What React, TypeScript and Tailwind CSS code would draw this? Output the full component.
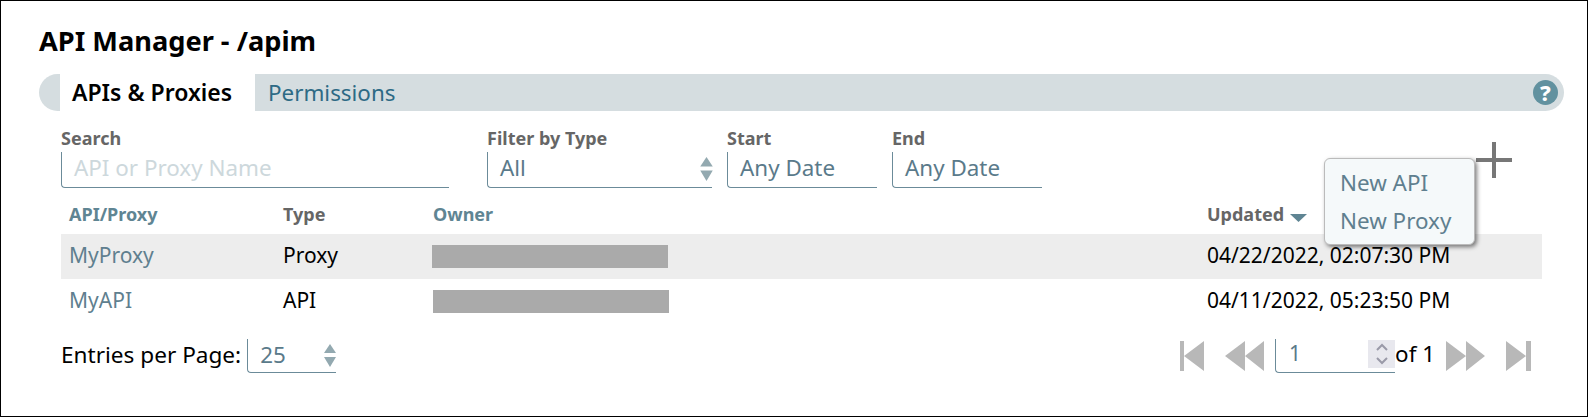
const rows = [
  { name: "MyProxy", type: "Proxy", updated: "04/22/2022, 02:07:30 PM", bar: "ml-0", shade: true },
  { name: "MyAPI", type: "API", updated: "04/11/2022, 05:23:50 PM", bar: "ml-[1px]", shade: false },
];

function Stepper({ className }: { className: string }) {
  return (
    <svg viewBox="0 0 12 23" className={className} fill="#93a9b0">
      <path d="M6 0 L12 9 H0 Z" />
      <path d="M0 13 H12 L6 23 Z" />
    </svg>
  );
}

function Field({ label, width, children }: { label: string; width: string; children: React.ReactNode }) {
  return (
    <div className={`flex flex-col ${width}`}>
      <label className="h-[25px] text-[18px] leading-[22px] font-bold text-[#666]">{label}</label>
      <div className="relative flex h-[36px] items-center rounded-bl-[4px] border-b border-l border-[#6b8b99] pb-[3px] pl-[12px] text-[22.4px] text-[#5a7a8a]">
        {children}
      </div>
    </div>
  );
}

function PagerIcon({ d, className, box }: { d: string; className: string; box: string }) {
  return (
    <svg viewBox={box} className={className} fill="#b8b8b8">
      <path d={d} />
    </svg>
  );
}

export default function App() {
  return (
    <div className="h-[417px] w-[1593px] bg-white font-['Noto_Sans',sans-serif]">
      <div className="relative flex h-[417px] w-[1588px] flex-col border border-black pl-[38px] pr-[23px]">
        <h1 className="mt-[22px] h-[51px] text-[27.2px] leading-[36px] font-bold text-black">API Manager - /apim</h1>

        <div className="flex h-[37px] items-stretch rounded-full bg-[#d5dde0]">
          <div className="ml-[21px] flex w-[195px] items-center bg-white pl-[12px] text-[23px] font-semibold text-black">
            APIs &amp; Proxies
          </div>
          <div className="flex flex-1 items-center pl-[13px] text-[22.4px] text-[#2d6a85]">Permissions</div>
          <div className="mr-[6px] flex items-center">
            <div className="flex h-[25px] w-[25px] items-center justify-center rounded-full bg-[#61919f] text-[22px] font-extrabold text-white">
              ?
            </div>
          </div>
        </div>

        <div className="ml-[22px] mt-[16px] flex">
          <Field label="Search" width="w-[388px]">
            <span className="text-[#cdd8dc]">API or Proxy Name</span>
          </Field>
          <div className="w-[38px]" />
          <Field label="Filter by Type" width="w-[225px]">
            <span>All</span>
            <Stepper className="absolute right-[-1px] top-[5px] h-[24px] w-[13px]" />
          </Field>
          <div className="w-[15px]" />
          <Field label="Start" width="w-[150px]">
            <span>Any Date</span>
          </Field>
          <div className="w-[15px]" />
          <Field label="End" width="w-[150px]">
            <span>Any Date</span>
          </Field>
          <svg viewBox="0 0 36 36" className="ml-[434px] mt-[15px] h-[36px] w-[36px]" fill="#777">
            <path d="M16 0 H20 V16 H36 V20 H20 V36 H16 V20 H0 V16 H16 Z" />
          </svg>
        </div>

        <div className="ml-[22px] mt-[8px] flex h-[38px] items-center pb-[1px] text-[18px] font-bold text-[#666]">
          <div className="w-[222px] pl-[8px] text-[#5f8593]">API/Proxy</div>
          <div className="w-[149px]">Type</div>
          <div className="w-[775px] pl-[1px] text-[#5f8593]">Owner</div>
          <div className="flex items-center gap-[6px]">
            Updated
            <svg viewBox="0 0 17 8" className="mt-[6px] h-[8px] w-[17px]" fill="#5f8593">
              <path d="M0 0 H17 L8.5 8 Z" />
            </svg>
          </div>
        </div>

        <div className="ml-[22px] mr-[22px] flex flex-col text-[21px]">
          {rows.map((r) => (
            <div key={r.name} className={`flex h-[45px] items-center pb-[1px] ${r.shade ? "bg-[#ededed]" : "bg-white"}`}>
              <div className="w-[222px] pl-[8px] text-[#5f7f8f]">{r.name}</div>
              <div className="w-[149px] text-black">{r.type}</div>
              <div className="w-[775px]">
                <div className={`h-[23px] w-[236px] bg-[#aaaaaa] ${r.bar}`} />
              </div>
              <div className="text-black">{r.updated}</div>
            </div>
          ))}
        </div>

        <div className="ml-[22px] mt-[15px] flex items-start">
          <span className="mt-[2px] text-[22.6px] leading-[28px] text-black">Entries per Page:</span>
          <div className="relative ml-[6px] flex h-[34px] w-[89px] items-center rounded-bl-[4px] border-b border-l border-[#6b8b99] pb-[1px] pl-[12px] text-[22.4px] text-[#5a7a8a]">
            25
            <Stepper className="absolute right-0 top-[5px] h-[23px] w-[12px]" />
          </div>
          <div className="ml-auto mr-[33px] flex items-start">
            <PagerIcon box="0 0 24 30" d="M0 0 H4 V30 H0 Z M4 15 L24 0 V30 Z" className="mt-[2px] h-[30px] w-[24px]" />
            <PagerIcon box="0 0 39 30" d="M0 15 L20 0 V30 Z M20 15 L39 0 V30 Z" className="ml-[21px] mt-[2px] h-[30px] w-[39px]" />
            <div className="relative ml-[11px] flex h-[34px] w-[120px] items-center rounded-bl-[4px] border-b border-l border-[#6b8b99] pb-[3px] pl-[13px] text-[21px] text-[#5a7a8a]">
              1
              <div className="absolute right-0 top-[1px] flex h-[28px] w-[27px] items-center justify-center bg-[#e8e8ee]">
                <svg viewBox="0 0 14 24" className="h-[24px] w-[14px]" fill="none" stroke="#9a9aa8" strokeWidth="2">
                  <path d="M2 8 L7 3 L12 8" />
                  <path d="M2 16 L7 21 L12 16" />
                </svg>
              </div>
            </div>
            <span className="mt-[1px] text-[22.4px] leading-[28px] text-black">of 1</span>
            <PagerIcon box="0 0 39 30" d="M0 0 L20 15 L0 30 Z M20 0 L39 15 L20 30 Z" className="ml-[11px] mt-[2px] h-[30px] w-[39px]" />
            <PagerIcon box="0 0 25 30" d="M0 0 L20 15 L0 30 Z M20 0 H25 V30 H20 Z" className="ml-[21px] mt-[2px] h-[30px] w-[25px]" />
          </div>
        </div>

        <div className="absolute left-[1323px] top-[157px] flex h-[87px] w-[151px] flex-col justify-center gap-[1px] rounded-[6px] border border-[#bbb] bg-[#f5f9fa] pl-[15px] text-[22.4px] leading-[37px] text-[#5f7f8f] shadow-[2px_2px_4px_rgba(0,0,0,0.5)]">
          <div>New API</div>
          <div>New Proxy</div>
        </div>
      </div>
    </div>
  );
}
